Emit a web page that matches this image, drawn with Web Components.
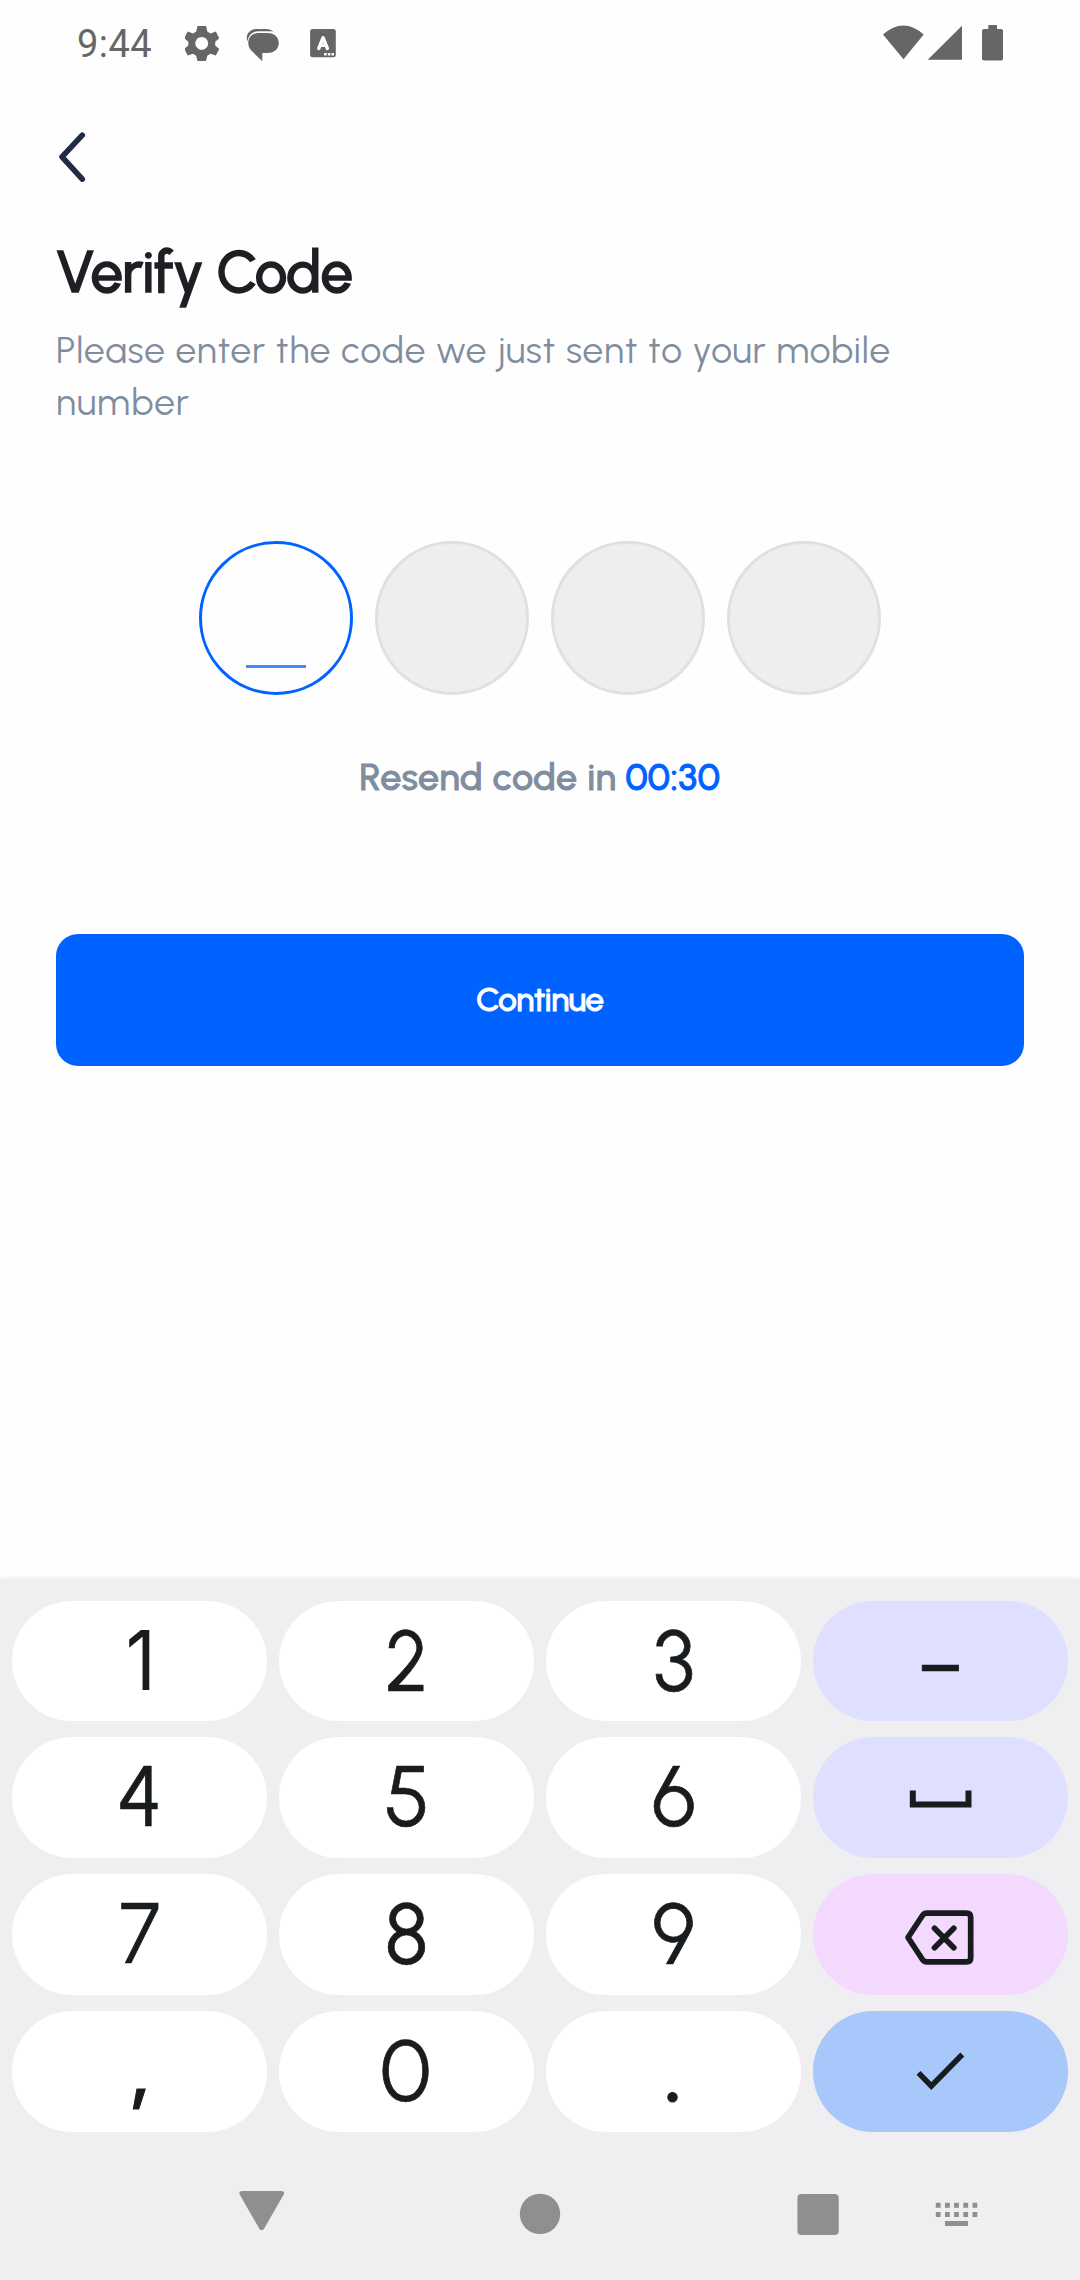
<!DOCTYPE html>
<html lang="en">
<head>
<meta charset="utf-8">
<title>Verify Code</title>
<style>
html,body{margin:0;padding:0;background:#fefefe}
</style>
</head>
<body>
<verify-screen></verify-screen>
<script>
function define(name, html, setup) {
  const t = document.createElement('template');
  t.innerHTML = html;
  customElements.define(name, class extends HTMLElement {
    connectedCallback() {
      if (this.shadowRoot) return;
      this.attachShadow({mode: 'open'}).appendChild(t.content.cloneNode(true));
      if (setup) setup(this, this.shadowRoot);
    }
  });
}

/* Single line of text whose tracking is set so that it spans the given width. */
define('fit-text', `<style>
:host{display:block;white-space:nowrap}
span{display:inline-block}
</style><span><slot></slot></span>`, (el, root) => {
  const span = root.querySelector('span');
  const n = el.textContent.length;
  const natural = span.getBoundingClientRect().width;
  span.style.letterSpacing = ((+el.getAttribute('width') - natural) / n) + 'px';
});

define('status-bar', `<style>
:host{display:flex;height:88px;box-sizing:border-box;padding:0 77px 0 77px;align-items:center;color:#666;font:38px/90px Roboto,sans-serif}
.sp{flex:1}
svg{display:block;fill:currentColor}
.time{width:107.500px}
</style>
<fit-text class="time" width="75">9:44</fit-text>
<svg width="34" height="88" viewBox="184.500 0 34 88"><path fill-rule="evenodd" d="M197 26h8.500l1.300 5.500 3.200 1.900 5.300-1.800 3.400 6.600-4 3.600v3.600l4 3.600-3.400 6.500-5.300-1.700-3.200 1.900-1.300 5.400H197l-1.300-5.400-3.200-1.900-5.300 1.700-3.400-6.500 4-3.600v-3.600l-4-3.600 3.400-6.600 5.300 1.800 3.200-1.900zM201.200 37a6.400 6.400 0 1 0 .001 0z"/></svg>
<svg width="91.700" height="88" viewBox="219.200 0 91.700 88"><path d="M259 33h9c6.500 0 11 4.200 11 10s-4.500 10-11 10h-5.500v8.200l-11-10.700c-2.200-2.200-3-4.500-3-7.500 0-6 4-10 10.500-10z"/><path d="M247.800 41.500c-3-6 2-12.500 9-12.500h9.500c3 0 5.500 1 7.300 2.700-1.300-.300-2.200-.400-3.600-.400h-11.500c-6 0-10 4-10.700 10.200z"/></svg>
<svg width="26" height="88" viewBox="310.200 0 26 88"><rect x="310.300" y="29" width="25.700" height="28.300" rx="2.500"/><g fill="none" stroke="#fefefe" stroke-width="3.400" stroke-linecap="round" stroke-linejoin="round"><path d="M319 48.500l4.300-10.800 4.300 10.800M320.500 45.400h5.600"/></g><path fill="#fefefe" d="M324.300 53h2.500v2.500h-2.500zM328 53h2.500v2.500h-2.500zM331.700 53h2.500v2.500h-2.500z"/></svg>
<div class="sp"></div>
<svg width="120" height="88" viewBox="883 0 120 88"><path d="M883 34.500Q903.300 16.500 923.700 34.500L903.500 59.300zM962 25.700v34h-34.300z"/><path d="M988.300 25h8.700v4h4a2 2 0 0 1 2 2v27.500a2 2 0 0 1-2 2h-17a2 2 0 0 1-2-2V31a2 2 0 0 1 2-2h4.300z"/></svg>`);

define('back-button', `<style>
:host{display:block;height:50px;padding:44px 0 0 2px}
svg{display:block}
</style>
<svg width="30" height="50" viewBox="58 132 30 50"><path d="M82.300 135.200L62 156.800l20.300 22.300" fill="none" stroke="#222b45" stroke-width="5.600" stroke-linecap="round" stroke-linejoin="round"/></svg>`);

define('code-digit', `<style>
:host{display:flex;box-sizing:border-box;width:154px;height:154px;border:3px solid #e0e0e0;border-radius:50%;background:#eee;align-items:flex-end;justify-content:center}
:host([active]){border-color:#0062ff;background:#fefefe}
i{display:none;width:60.500px;height:3px;margin-bottom:24px;background:#4489ff}
:host([active]) i{display:block}
</style><i></i>`);

define('code-field', `<style>
:host{display:flex;gap:22px;justify-content:center}
</style><code-digit active></code-digit><code-digit></code-digit><code-digit></code-digit><code-digit></code-digit>`);

define('primary-button', `<style>
:host{display:flex;height:132px;border-radius:22px;background:#0062ff;color:#fff;align-items:center;justify-content:center;font:500 33px/40px Urbanist,Lato,sans-serif;-webkit-text-stroke:1px currentColor}
</style><slot></slot>`);

define('num-key', `<style>
:host{display:flex;height:120.700px;border-radius:60.350px;background:#fff;color:#191c1e;justify-content:center;font:450 85px/119.700px Urbanist,Lato,sans-serif;-webkit-text-stroke:.7px currentColor}
:host([tone=lilac]){background:#dfdfff}
:host([tone=pink]){background:#f4d9fe}
:host([tone=blue]){background:#a8c7fb}
:host([face=inter]){font-family:Inter,sans-serif;font-size:82px;font-weight:400;-webkit-text-stroke:0}
span{display:block;transform-origin:50% 90px}
::slotted(svg){display:block;width:255px;height:120.700px}
</style><span><slot></slot></span>`, (el, root) => {
  const t = el.getAttribute('adjust');
  if (t) root.querySelector('span').style.transform = t;
});

define('num-pad', `<style>
:host{display:grid;grid-template-columns:repeat(4,255px);gap:16.020px 12px;padding:21.750px 12px 0}
</style>
<num-key face="inter" adjust="translateX(1px) scaleX(.9)">1</num-key><num-key adjust="translateX(.5px) scaleX(.92)">2</num-key><num-key adjust="scaleX(.98)">3</num-key>
<num-key tone="lilac" adjust="translateY(3.500px) scaleX(.86)">–</num-key>
<num-key adjust="translateX(.5px) scaleX(.97)">4</num-key><num-key adjust="translateX(.5px) scaleX(.97)">5</num-key><num-key adjust="scaleX(.96)">6</num-key>
<num-key tone="lilac"><svg viewBox="0 0 255 120.700"><path d="M99.800 53.500v14h55.700V53.500" fill="none" stroke="#191c1e" stroke-width="6"/></svg></num-key>
<num-key adjust="scaleX(.87)">7</num-key><num-key adjust="scaleX(.97)">8</num-key><num-key adjust="scaleX(.96)">9</num-key>
<num-key tone="pink"><svg viewBox="0 0 255 120.700"><g fill="none" stroke="#191c1e" stroke-width="5.700" stroke-linejoin="round" stroke-linecap="round"><path d="M95 63.500l14.300-21.800q1.700-2.600 4.500-2.600h39.700q4.200 0 4.200 4.200v40.400q0 4.200-4.200 4.200h-39.700q-2.800 0-4.500-2.600z"/><path d="M121.500 54.300l19.300 19.400m0-19.400l-19.300 19.400"/></g></svg></num-key>
<num-key adjust="translate(1px,2px) scale(1.400)">,</num-key><num-key adjust="translateX(-1px)">0</num-key><num-key adjust="scale(1.400)">.</num-key>
<num-key tone="blue"><svg viewBox="0 0 255 120.700"><path d="M105.500 61.800l12.800 13.200 31-31.500" fill="none" stroke="#191c1e" stroke-width="5.500"/></svg></num-key>`);

define('nav-bar', `<style>
:host{display:flex;padding:58.400px 0 0 239px;align-items:flex-start}
svg{display:block;fill:#8f8f8f}
svg+svg{margin-left:234px}
svg+svg+svg{margin-left:235.500px}
svg+svg+svg+svg{margin-left:97px}
</style>
<svg width="46" height="46" viewBox="239 2190 46 46"><path d="M241.500 2191h40.500q3 .500 1.700 3.500l-19.800 34.500q-2.200 2.500-4.400 0l-19.800-34.500q-1.300-3 1.800-3.500z"/></svg>
<svg width="42" height="46" viewBox="519 2190 42 46"><circle cx="540" cy="2213.900" r="20.200"/></svg>
<svg width="42" height="46" viewBox="796.500 2190 42 46"><rect x="796.900" y="2194" width="41.300" height="41" rx="4"/></svg>
<svg width="43" height="46" viewBox="936 2190 43 46" overflow="visible"><path d="M935.800 2202.800h4.800v5h-4.800zM945 2202.800h4.800v5H945zM954.100 2202.800h4.800v5h-4.800zM963.300 2202.800h4.800v5h-4.800zM972.500 2202.800h4.800v5h-4.800zM935.800 2212h4.800v5h-4.800zM945 2212h4.800v5H945zM954.100 2212h4.800v5h-4.800zM963.300 2212h4.800v5h-4.800zM972.500 2212h4.800v5h-4.800zM945 2221h23v5h-23z"/></svg>`);

define('soft-keyboard', `<style>
:host{display:block;height:701px;background:#efeff1;box-shadow:0 0 6px rgba(0,0,0,.09)}
</style><num-pad></num-pad><nav-bar></nav-bar>`);

define('verify-screen', `<style>
:host{display:flex;flex-direction:column;width:1080px;height:2280px;overflow:hidden;background:#fefefe;font-family:Urbanist,Lato,sans-serif}
main{flex:1;padding:0 56px;display:flex;flex-direction:column}
.title{margin-top:55px;color:#1e1e24;font-size:57.500px;font-weight:500;line-height:70px;-webkit-text-stroke:1.600px currentColor}
.sub{color:#808d9e;font-size:37px;font-weight:400;line-height:52px}
.first{margin-top:17px}
code-field{margin-top:113px}
.resend{display:flex;justify-content:center;gap:9px;margin-top:56px;color:#808d9e;font-size:37px;font-weight:500;line-height:53px;-webkit-text-stroke:1.100px currentColor}
.timer{color:#0062ff}
primary-button{margin-top:130px}
</style>
<status-bar></status-bar>
<main>
<back-button></back-button>
<fit-text class="title" width="296.500">Verify Code</fit-text>
<fit-text class="sub first" width="835">Please enter the code we just sent to your mobile</fit-text>
<fit-text class="sub" width="134">number</fit-text>
<code-field></code-field>
<div class="resend"><fit-text width="257">Resend code in</fit-text><fit-text class="timer" width="95">00:30</fit-text></div>
<primary-button><fit-text width="127.500">Continue</fit-text></primary-button>
</main>
<soft-keyboard></soft-keyboard>`);
</script>
</body>
</html>
